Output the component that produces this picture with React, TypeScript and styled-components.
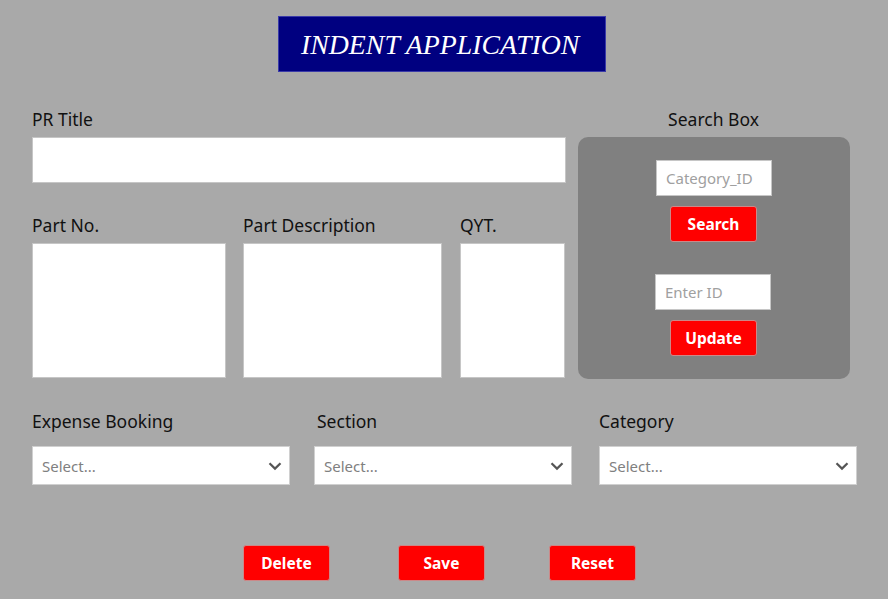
import React from 'react';
import styled, { createGlobalStyle } from 'styled-components';

const GlobalStyle = createGlobalStyle`
  html, body {
    margin: 0;
    padding: 0;
    background: #a9a9a9;
    font-family: "Noto Sans", "Open Sans", sans-serif;
  }
`;

const Page = styled.div`
  width: 888px;
  height: 599px;
  box-sizing: border-box;
  padding: 16px 0 0 32px;
  background: #a9a9a9;
  overflow: hidden;
`;

const TitleWrap = styled.div`
  display: flex;
  justify-content: center;
  padding-right: 36px;
`;

const Title = styled.h1`
  margin: 0;
  width: 328px;
  height: 56px;
  box-sizing: border-box;
  background: #000080;
  border: 1px solid #3a3aa8;
  color: #fff;
  font-family: "Liberation Serif", "Times New Roman", serif;
  font-style: italic;
  font-weight: normal;
  font-size: 27.8px;
  display: flex;
  align-items: center;
  padding-left: 22px;
  padding-top: 1px;
`;

const TopRow = styled.div`
  display: flex;
  gap: 12px;
  margin-top: 35px;
`;

const LeftCol = styled.div`
  width: 534px;
  display: flex;
  flex-direction: column;
`;

const Label = styled.label`
  display: block;
  color: #111;
  font-size: 17.5px;
  line-height: 24px;
  height: 24px;
  margin-bottom: 6px;
  box-sizing: border-box;
`;

const TextInput = styled.input`
  display: block;
  width: 534px;
  height: 46px;
  box-sizing: border-box;
  border: 1px solid #c6c6c6;
  background: #fff;
  outline: none;
`;

const PartsRow = styled.div`
  display: flex;
  margin-top: 30px;
`;

const Field = styled.div<{ $w: number; $gap?: number }>`
  width: ${({ $w }) => $w}px;
  margin-right: ${({ $gap }) => $gap ?? 0}px;
  display: flex;
  flex-direction: column;
`;

const Area = styled.textarea`
  display: block;
  width: 100%;
  height: 135px;
  box-sizing: border-box;
  border: 1px solid #c6c6c6;
  background: #fff;
  resize: none;
  outline: none;
`;

const RightCol = styled.div`
  width: 272px;
  display: flex;
  flex-direction: column;
`;

const CenterLabel = styled(Label)`
  text-align: center;
  padding-right: 1px;
`;

const SearchPanel = styled.div`
  height: 242px;
  box-sizing: border-box;
  background: #808080;
  border-radius: 10px;
  display: flex;
  flex-direction: column;
  align-items: center;
  padding-top: 23px;
`;

const SmallInput = styled.input<{ $shift?: number }>`
  width: 116px;
  height: 36px;
  box-sizing: border-box;
  border: 1px solid #c6c6c6;
  background: #fff;
  font-family: "Noto Sans", "Open Sans", sans-serif;
  font-size: 15px;
  padding: 0 9px;
  margin-left: ${({ $shift }) => $shift ?? 0}px;
  outline: none;
  &::placeholder {
    color: #a0a0a0;
  }
`;

const RedButton = styled.button`
  width: 87px;
  height: 36px;
  box-sizing: border-box;
  background: #ff0000;
  color: #fff;
  border: 1px solid #c88;
  border-radius: 3px;
  font-family: "Noto Sans", "Open Sans", sans-serif;
  font-weight: bold;
  font-size: 15.5px;
  padding: 0;
  cursor: pointer;
`;

const PanelButton = styled(RedButton)`
  margin-top: 10px;
  margin-left: -1px;
`;

const Spacer = styled.div`
  height: 32px;
`;

const SelectRow = styled.div`
  display: flex;
  margin-top: 30px;
`;

const SelectField = styled.div<{ $offset: number }>`
  width: 258px;
  margin-left: ${({ $offset }) => $offset}px;
`;

const SelectLabel = styled(Label)<{ $indent: number }>`
  margin-bottom: 13px;
  padding-left: ${({ $indent }) => $indent}px;
`;

const SelectBox = styled.div`
  height: 39px;
  box-sizing: border-box;
  background: #fff;
  border: 1px solid #d0d0d0;
  display: flex;
  align-items: center;
  justify-content: space-between;
  padding: 0 7px 0 9px;
  color: #808080;
  font-size: 15px;
`;

const Chevron = () => (
  <svg width="14" height="10" viewBox="0 0 14 10" fill="none">
    <path d="M1.5 2.2 L7 7.6 L12.5 2.2" stroke="#555" strokeWidth="2.2" />
  </svg>
);

const ActionRow = styled.div`
  display: flex;
  margin-top: 60px;
  padding-left: 211px;
`;

const ActionButton = styled(RedButton)<{ $gap: number }>`
  margin-right: ${({ $gap }) => $gap}px;
`;

const selects = [
  { label: 'Expense Booking', offset: 0, indent: 0 },
  { label: 'Section', offset: 24, indent: 3 },
  { label: 'Category', offset: 27, indent: 0 },
];

export default function App() {
  return (
    <>
      <GlobalStyle />
      <Page>
        <TitleWrap>
          <Title>INDENT APPLICATION</Title>
        </TitleWrap>
        <TopRow>
          <LeftCol>
            <Label>PR Title</Label>
            <TextInput />
            <PartsRow>
              <Field $w={194} $gap={17}>
                <Label>Part No.</Label>
                <Area />
              </Field>
              <Field $w={199} $gap={18}>
                <Label>Part Description</Label>
                <Area />
              </Field>
              <Field $w={105}>
                <Label>QYT.</Label>
                <Area />
              </Field>
            </PartsRow>
          </LeftCol>
          <RightCol>
            <CenterLabel>Search Box</CenterLabel>
            <SearchPanel>
              <SmallInput placeholder="Category_ID" />
              <PanelButton>Search</PanelButton>
              <Spacer />
              <SmallInput placeholder="Enter ID" $shift={-2} />
              <PanelButton>Update</PanelButton>
            </SearchPanel>
          </RightCol>
        </TopRow>
        <SelectRow>
          {selects.map((s) => (
            <SelectField key={s.label} $offset={s.offset}>
              <SelectLabel $indent={s.indent}>{s.label}</SelectLabel>
              <SelectBox>
                <span>Select...</span>
                <Chevron />
              </SelectBox>
            </SelectField>
          ))}
        </SelectRow>
        <ActionRow>
          <ActionButton $gap={68}>Delete</ActionButton>
          <ActionButton $gap={64}>Save</ActionButton>
          <ActionButton $gap={0}>Reset</ActionButton>
        </ActionRow>
      </Page>
    </>
  );
}
